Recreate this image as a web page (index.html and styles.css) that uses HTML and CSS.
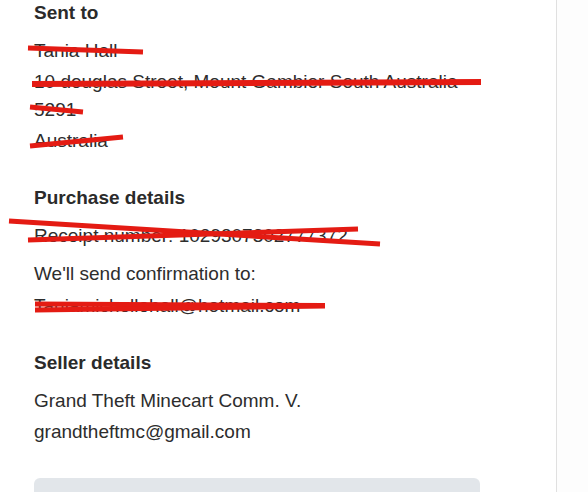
FILE: index.html
```html
<!DOCTYPE html>
<html lang="en">
<head>
<meta charset="utf-8">
<title>Order details</title>
<link rel="stylesheet" href="styles.css">
</head>
<body>
<div class="page">
  <main class="panel">
    <section class="section">
      <h3 class="section-title">Sent to</h3>
      <p class="line">Tania Hall</p>
      <p class="line">10 douglas Street, Mount Gambier South Australia 5291</p>
      <p class="line">Australia</p>
    </section>
    <section class="section">
      <h3 class="section-title">Purchase details</h3>
      <p class="line receipt">Receipt number: 1029307302777372</p>
      <p class="line confirm">We'll send confirmation to:</p>
      <p class="line">Taniamichellehall@hotmail.com</p>
    </section>
    <section class="section">
      <h3 class="section-title">Seller details</h3>
      <p class="line">Grand Theft Minecart Comm. V.</p>
      <p class="line">grandtheftmc@gmail.com</p>
    </section>
    <div class="action-box"></div>
  </main>
  <aside class="side"></aside>
  <svg class="redactions" width="588" height="492" viewBox="0 0 588 492" aria-hidden="true">
    <g stroke="#e41b13" stroke-width="5" stroke-linecap="butt" fill="none">
      <line x1="28" y1="48" x2="143" y2="52"/>
      <line x1="32" y1="84" x2="481" y2="82" stroke-width="6"/>
      <line x1="30" y1="107" x2="83" y2="112"/>
      <line x1="30" y1="146" x2="123" y2="137"/>
      <line x1="9" y1="221" x2="380" y2="244"/>
      <line x1="28" y1="240" x2="358" y2="229"/>
      <line x1="35" y1="304" x2="325" y2="305.5"/>
      <line x1="35" y1="310" x2="325" y2="306"/>
    </g>
  </svg>
</div>
</body>
</html>
```

FILE: styles.css
```css
html, body {
  margin: 0;
  padding: 0;
  background: #ffffff;
}

body {
  font-family: "Liberation Sans", Arial, sans-serif;
  font-size: 19px;
  color: #2d2d2d;
}

.page {
  position: relative;
  display: flex;
  width: 588px;
  height: 492px;
  overflow: hidden;
}

.panel {
  width: 557px;
  flex: none;
  box-sizing: border-box;
  border-right: 1px solid #e0e0e0;
  padding: 1px 0 0 34px;
  display: flex;
  flex-direction: column;
  gap: 31px;
}

.side {
  flex: 1;
  background: #fdfdfd;
}

.section {
  width: 446px;
  display: flex;
  flex-direction: column;
  gap: 3px;
}

.section-title {
  margin: 0 0 9px 0;
  font-size: 19px;
  font-weight: bold;
  line-height: 24px;
  color: #2b2b2b;
}

.line {
  margin: 0;
  line-height: 28px;
}

.receipt {
  margin-bottom: 7px;
}

.confirm {
  margin-bottom: 1px;
}

.action-box {
  width: 446px;
  height: 40px;
  margin-top: 1px;
  flex: none;
  background: #e2e6ea;
  border-radius: 6px;
}

.redactions {
  position: absolute;
  left: 0;
  top: 0;
  pointer-events: none;
}
```
